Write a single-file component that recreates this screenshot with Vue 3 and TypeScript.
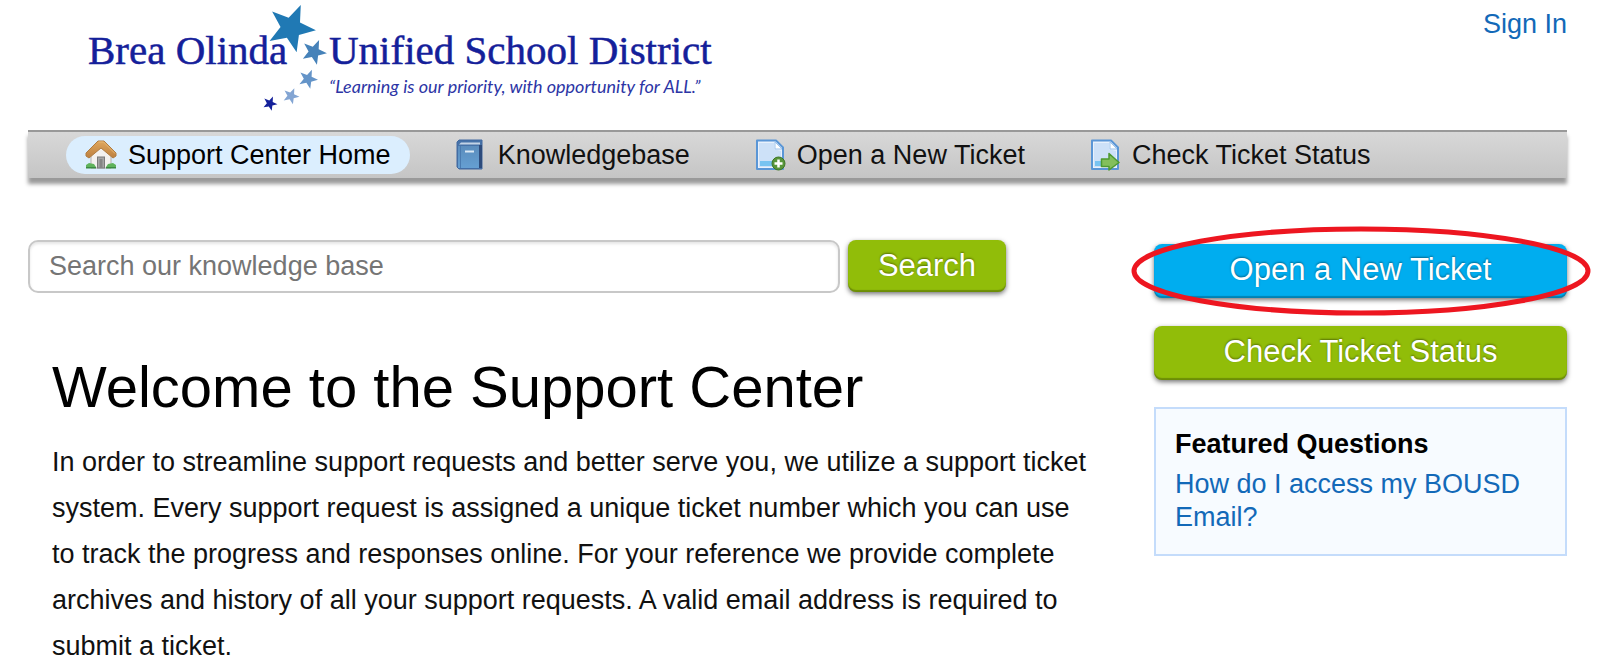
<script setup lang="ts">
import { ref } from 'vue'

interface Star {
  cx: number
  cy: number
  r: number
  fill: string
}

interface NavItem {
  label: string
  icon: 'home' | 'book' | 'new' | 'status'
  active?: boolean
}

const stars: Star[] = [
  { cx: 291, cy: 28, r: 25, fill: '#2079b4' },
  { cx: 314, cy: 52, r: 13, fill: '#4682b9' },
  { cx: 308, cy: 79, r: 10, fill: '#6494c8' },
  { cx: 291, cy: 96, r: 8.5, fill: '#83a5d3' },
  { cx: 270, cy: 103.5, r: 7.5, fill: '#14209a' },
]

function starPoints(s: Star): string {
  const points: string[] = []
  for (let i = 0; i < 10; i++) {
    const radius = i % 2 === 0 ? s.r : s.r * 0.42
    const angle = ((23 + i * 36) * Math.PI) / 180
    points.push(`${(s.cx + radius * Math.sin(angle)).toFixed(2)},${(s.cy - radius * Math.cos(angle)).toFixed(2)}`)
  }
  return points.join(' ')
}

const navItems: NavItem[] = [
  { label: 'Support Center Home', icon: 'home', active: true },
  { label: 'Knowledgebase', icon: 'book' },
  { label: 'Open a New Ticket', icon: 'new' },
  { label: 'Check Ticket Status', icon: 'status' },
]

const query = ref('')
</script>

<template>
  <div class="page">
    <header class="header">
      <a class="logo" href="#" aria-label="Brea Olinda Unified School District">
        <svg width="720" height="118" viewBox="0 0 720 118">
          <text class="logo-name" x="88" y="64">Brea Olinda</text>
          <text class="logo-name" x="329" y="64">Unified School District</text>
          <text class="logo-motto" x="329" y="93">“Learning is our priority, with opportunity for ALL.”</text>
          <polygon v-for="s in stars" :key="s.cy" :points="starPoints(s)" :fill="s.fill" />
        </svg>
      </a>
      <a class="sign-in" href="#">Sign In</a>
    </header>

    <nav class="nav">
      <a v-for="item in navItems" :key="item.label" href="#" class="nav-item" :class="{ active: item.active }">
        <svg v-if="item.icon === 'home'" class="icon" viewBox="0 0 32 32">
          <defs>
            <linearGradient id="roof" x1="0" y1="0" x2="0" y2="1">
              <stop offset="0" stop-color="#dfa65c" />
              <stop offset="1" stop-color="#bd8040" />
            </linearGradient>
          </defs>
          <path d="M6 15 16 7l10 8v14H6z" fill="#f3f1ef" stroke="#b5b1ae" />
          <path d="M1 29v-3l3-2 5 1 2 3v1zM31 29v-3l-3-2-5 1-2 3v1z" fill="#5fb35c" />
          <path d="M1 28h10v1.500H1zM21 28h10v1.500H21z" fill="#3c8a43" />
          <rect x="12.500" y="18" width="7" height="11" fill="#a5a5a5" stroke="#7a7a7a" />
          <path d="M14.500 20h3v9h-3z" fill="#858585" />
          <path d="M13 2h6l12 12v3l-3 2L16 9 4 19l-3-2v-3z" fill="url(#roof)" stroke="#b07c41" stroke-width="1" stroke-linejoin="round" />
          <path d="M13.500 3h5L30 14.500" fill="none" stroke="#e6b672" />
        </svg>
        <svg v-else-if="item.icon === 'book'" class="icon" viewBox="0 0 32 32">
          <defs>
            <linearGradient id="cover" x1="0" y1="0" x2="0" y2="1">
              <stop offset="0" stop-color="#5b8dbd" />
              <stop offset="1" stop-color="#659fd2" />
            </linearGradient>
          </defs>
          <path d="M4 1h23v29H4L2 28V3z" fill="#4672a8" stroke="#4069a0" stroke-linejoin="round" />
          <path d="M24 6h3v23h-3z" fill="#2d4b7c" />
          <path d="M6 3.500h19v2H4z" fill="#c3d3e6" />
          <rect x="3" y="7" width="21" height="22" fill="url(#cover)" />
          <path d="M5.500 7v22" stroke="#4a7bb0" />
          <path d="M10 12.500h9" stroke="#dbe8f4" stroke-width="2" />
        </svg>
        <svg v-else class="icon" viewBox="0 0 32 32">
          <path d="M3 1.500h19l7 7V30H3z" fill="#e8f1fc" stroke="#5a96d6" stroke-width="2" stroke-linejoin="round" />
          <path d="M5 4h15v6l7 2v16H5z" fill="#cde1f8" />
          <path d="M21 3v7h7z" fill="#fff" stroke="#9dc3ec" />
          <path d="M6 22h16v5H6z" fill="#78c3f1" />
          <g v-if="item.icon === 'new'">
            <circle cx="24.500" cy="24.500" r="6.500" fill="#58963a" stroke="#3d7725" />
            <path d="M24.500 20.500v8M20.500 24.500h8" stroke="#fff" stroke-width="2.500" />
          </g>
          <path v-else d="M12.500 20H20v-5.500L30 23.500l-10 7.500v-3.500h-7.500z" fill="#83bf5c" stroke="#4d9a32" stroke-width="1.500" stroke-linejoin="round" />
        </svg>
        <span>{{ item.label }}</span>
      </a>
    </nav>

    <div class="columns">
      <main>
        <form class="search" @submit.prevent>
          <input v-model="query" type="text" aria-label="Search our knowledge base" placeholder="Search our knowledge base" />
          <button type="submit" class="button green">Search</button>
        </form>
        <section class="welcome">
          <h1>Welcome to the Support Center</h1>
          <p>
            In order to streamline support requests and better serve you, we utilize a support ticket
            system. Every support request is assigned a unique ticket number which you can use to track
            the progress and responses online. For your reference we provide complete archives and
            history of all your support requests. A valid email address is required to submit a ticket.
          </p>
        </section>
      </main>

      <aside class="sidebar">
        <div class="highlighted">
          <a class="button blue" href="#">Open a New Ticket</a>
          <svg class="ring" viewBox="0 0 460 90" preserveAspectRatio="none" aria-hidden="true">
            <ellipse cx="230" cy="45" rx="227" ry="42" />
          </svg>
        </div>
        <a class="button green" href="#">Check Ticket Status</a>
        <section class="featured">
          <h2>Featured Questions</h2>
          <a href="#">How do I access my BOUSD Email?</a>
        </section>
      </aside>
    </div>
  </div>
</template>

<style>
body {
  margin: 0;
  background: #fff;
}
</style>

<style scoped>
.page {
  box-sizing: border-box;
  padding: 0 33px 0 28px;
  font-family: 'Liberation Sans', Arial, sans-serif;
  font-size: 27px;
  line-height: 33px;
  color: #000;
  overflow: hidden;
}

a {
  color: #1269b8;
  text-decoration: none;
}

.header {
  display: flex;
  justify-content: space-between;
  align-items: flex-start;
  height: 130px;
}

.logo {
  margin-left: -28px;
}

.logo svg {
  display: block;
}

.logo-name {
  font-family: 'Liberation Serif', 'Times New Roman', serif;
  font-size: 41px;
  fill: #14209a;
  stroke: #14209a;
  stroke-width: 0.5px;
}

.logo-motto {
  font-family: Lato, sans-serif;
  font-size: 18px;
  font-style: italic;
  fill: #2c35a5;
}

.sign-in {
  margin-top: 8px;
}

.nav {
  display: flex;
  align-items: center;
  gap: 26px;
  box-sizing: border-box;
  height: 48px;
  padding: 0 38px;
  border-top: 2px solid #999;
  background: linear-gradient(#d8d8d8, #c5c5c5);
  box-shadow: 0 6px 4px rgba(0, 0, 0, 0.4);
}

.nav-item {
  display: flex;
  align-items: center;
  gap: 11px;
  height: 38px;
  padding: 0 19px;
  border-radius: 19px;
  color: #111;
  white-space: nowrap;
}

.nav-item.active {
  background: #dbeefe;
  color: #000;
}

.icon {
  width: 32px;
  height: 32px;
  flex: none;
}

.columns {
  display: grid;
  grid-template-columns: 1fr 413px;
  column-gap: 60px;
  padding-top: 62px;
}

.search {
  display: flex;
  gap: 8px;
  margin-right: 88px;
}

.search input {
  flex: 1;
  min-width: 0;
  box-sizing: border-box;
  height: 53px;
  padding: 0 19px;
  border: 2px solid #c8c8c8;
  border-radius: 10px;
  font: inherit;
  background: #fff;
  box-shadow: inset 0 2px 3px rgba(0, 0, 0, 0.1);
  outline: none;
}

.search input::placeholder {
  color: #757575;
  opacity: 1;
}

.button {
  display: block;
  box-sizing: border-box;
  height: 54px;
  border: 0;
  border-radius: 8px;
  font-family: inherit;
  font-size: 31px;
  line-height: 52px;
  text-align: center;
  color: #fff;
  text-shadow: 0 -1px 2px rgba(0, 0, 0, 0.4);
  box-shadow: 0 2px 5px rgba(0, 0, 0, 0.55), inset 0 -2px 1px rgba(0, 0, 0, 0.25);
}

.search .button {
  width: 158px;
  height: 52px;
  padding: 0;
}

.green {
  background: #91bd09;
}

.blue {
  background: #00adef;
}

.welcome {
  padding: 61px 0 0 24px;
}

h1 {
  margin: 0;
  font-size: 58px;
  line-height: 66px;
  font-weight: 400;
}

p {
  margin: 19px 0 0;
  line-height: 46px;
  color: #111;
}

.sidebar {
  display: flex;
  flex-direction: column;
  gap: 28px;
  padding-top: 4px;
}

.highlighted {
  position: relative;
}

.ring {
  position: absolute;
  top: -18px;
  left: -23px;
  width: calc(100% + 47px);
  height: 90px;
  fill: none;
  stroke: #ed1620;
  stroke-width: 5px;
  pointer-events: none;
}

.featured {
  margin-top: -1px;
  padding: 19px 19px 20px;
  border: 2px solid #c4dcfb;
  background: #f7fbff;
}

h2 {
  margin: 0 0 7px;
  font-size: 27px;
  line-height: 33px;
  font-weight: 700;
}

.featured a {
  display: block;
}
</style>
